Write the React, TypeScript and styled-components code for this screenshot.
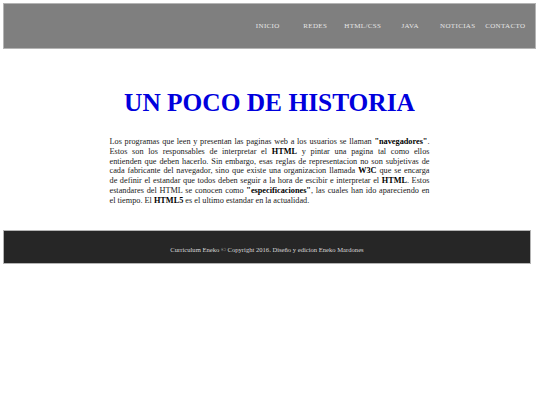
import React from 'react';
import styled, { createGlobalStyle } from 'styled-components';

const GlobalStyle = createGlobalStyle`
    html, body {
        margin: 0;
        padding: 0;
        background: #ffffff;
    }
    body {
        padding: 3px 4px 0 3px;
        font-family: "Liberation Serif", "Times New Roman", serif;
    }
`;

const Header = styled.header`
    display: flex;
    justify-content: flex-end;
    align-items: center;
    height: 44px;
    padding-right: 6px;
    background-color: #7f7f7f;
    border: 1px solid #b4b4b4;
`;

const NavItem = styled.a`
    width: 47.5px;
    text-align: center;
    font-size: 7px;
    letter-spacing: 0.35px;
    color: #e6e6e6;
    text-decoration: none;
    white-space: nowrap;
`;

const Main = styled.main`
    display: flex;
    flex-direction: column;
    align-items: center;
    padding: 38px 0 25px;
`;

const Title = styled.h1`
    margin: 0 0 20px;
    font-size: 25.4px;
    font-weight: 700;
    color: #0000dd;
    line-height: 30px;
`;

const Paragraph = styled.p`
    margin: 0;
    width: 320px;
    font-size: 8.25px;
    line-height: 9.75px;
    color: #1a1a1a;

    b {
        color: #000;
    }
`;

// cada línea como en el original, justificada salvo la última
const Line = styled.span<{ $last?: boolean }>`
    display: block;
    white-space: nowrap;
    text-align: ${p => (p.$last ? 'left' : 'justify')};
    text-align-last: ${p => (p.$last ? 'left' : 'justify')};
`;

const Footer = styled.footer`
    display: flex;
    justify-content: center;
    align-items: center;
    width: 528px;
    height: 34px;
    padding-top: 4px;
    box-sizing: border-box;
    background-color: #262626;
    border: 1px solid #b4b4b4;
    font-size: 6.6px;
    color: #d8d8d8;
`;

const NAV = ['INICIO', 'REDES', 'HTML/CSS', 'JAVA', 'NOTICIAS', 'CONTACTO'];

export default function App() {
    return (
        <>
            <GlobalStyle />
            <Header>
                {NAV.map(item => (
                    <NavItem key={item} href="#">{item}</NavItem>
                ))}
            </Header>
            <Main>
                <Title>UN POCO DE HISTORIA</Title>
                <Paragraph>
                    <Line>Los programas que leen y presentan las paginas web a los usuarios se llaman <b>"navegadores"</b>.</Line>
                    <Line>Estos son los responsables de interpretar el <b>HTML</b> y pintar una pagina tal como ellos</Line>
                    <Line>entienden que deben hacerlo. Sin embargo, esas reglas de representacion no son subjetivas de</Line>
                    <Line>cada fabricante del navegador, sino que existe una organizacion llamada <b>W3C</b> que se encarga</Line>
                    <Line>de definir el estandar que todos deben seguir a la hora de escibir e interpretar el <b>HTML</b>. Estos</Line>
                    <Line>estandares del HTML se conocen como <b>"especificaciones"</b>, las cuales han ido apareciendo en</Line>
                    <Line $last>el tiempo. El <b>HTML5</b> es el ultimo estandar en la actualidad.</Line>
                </Paragraph>
            </Main>
            <Footer>Curriculum Eneko © Copyright 2016. Diseño y edicion Eneko Mardones</Footer>
        </>
    );
}
